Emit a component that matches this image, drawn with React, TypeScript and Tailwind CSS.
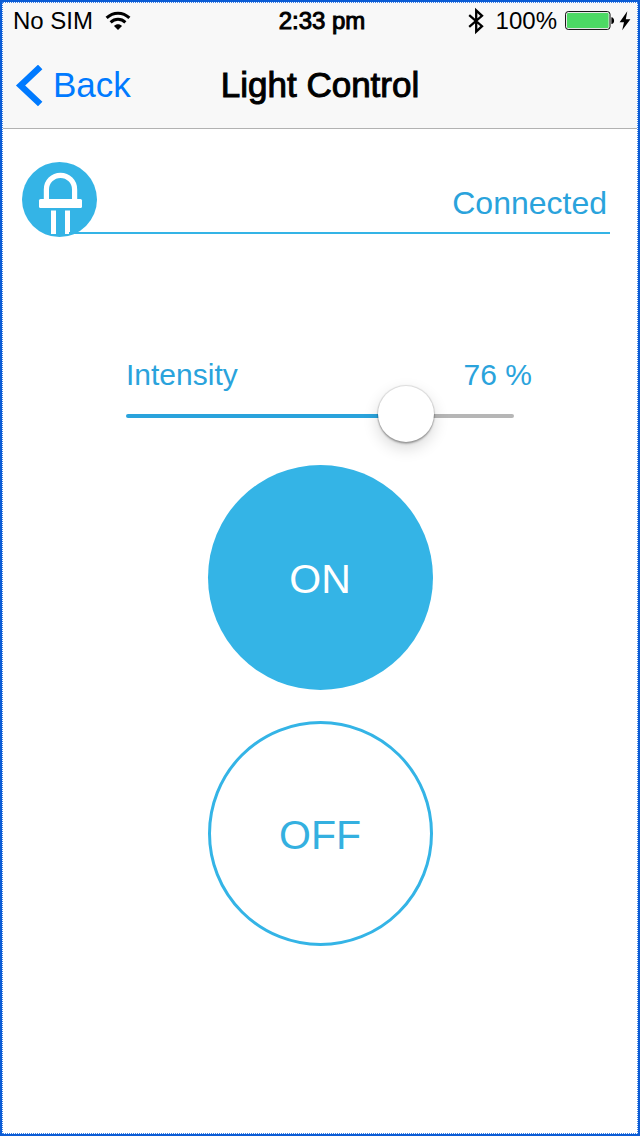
import { useState } from "react";

function WifiIcon() {
  return (
    <svg viewBox="0 0 26 20" className="h-5 w-[26px]" aria-hidden="true">
      <g fill="none" stroke="#000" strokeWidth="3">
        <path d="M1.6 6.9C8.2 .6 17.8 .6 24.4 6.9" />
        <path d="M5.6 11.3C9.9 7.3 16.1 7.3 20.4 11.3" />
      </g>
      <path d="M9 14.9C11.2 12.6 14.8 12.6 17 14.9L13 19Z" />
    </svg>
  );
}

function BluetoothIcon() {
  return (
    <svg viewBox="0 0 16 28" className="h-7 w-4" aria-hidden="true">
      <path
        d="M1.2 8.2 14 19.2 8.2 24.6V3.4L14 8.8 1.2 19.8"
        fill="none"
        stroke="#000"
        strokeWidth="2.3"
      />
    </svg>
  );
}

function BatteryIcon() {
  return (
    <svg viewBox="0 0 50 20" className="h-5 w-[50px]" aria-hidden="true">
      <rect x=".6" y=".6" width="44.4" height="17.8" rx="2.6" fill="#fff" stroke="#000" strokeWidth="1" />
      <rect x="2" y="2" width="41.6" height="15" rx="1" fill="#4cd964" />
      <path d="M46.4 6.2c3.6.3 3.6 6.6 0 6.9z" />
    </svg>
  );
}

function BoltIcon() {
  return (
    <svg viewBox="0 0 12 20" className="h-5 w-3" aria-hidden="true">
      <path d="M8.3.2.6 11.2H5L3.2 19.2 11.4 8.2H6.8Z" />
    </svg>
  );
}

function LedIcon() {
  return (
    <svg viewBox="0 0 75 75" className="h-[75px] w-[75px] shrink-0" aria-hidden="true">
      <circle cx="37.5" cy="37.5" r="37.5" fill="#34b4e6" />
      <path d="M24.4 39V27.6a14.1 14.1 0 0 1 28.2 0V39" fill="none" stroke="#fff" strokeWidth="5.2" transform="translate(0 -.2)" />
      <rect x="17" y="37" width="43" height="9" rx="1.5" fill="#fff" />
      <path d="M29 48.5h5V72h-5zM43 48.5h5V72h-5z" fill="#fff" />
    </svg>
  );
}

export default function App() {
  const [intensity, setIntensity] = useState(76);
  const [on, setOn] = useState(true);

  return (
    <div className="flex min-h-screen flex-col border-2 border-[#0b5cd5] bg-white font-['Liberation_Sans',Arial,sans-serif] text-black">
      <div className="flex flex-1 flex-col border border-dotted border-[#3f83e6]">
        <header className="border-b border-[#b2b2b2] bg-[#f8f8f8]">
          <div className="grid h-9 grid-cols-[1fr_auto_1fr] items-center pr-1.5 pl-2.5 text-2xl">
            <div className="flex items-center gap-3">
              <span>No SIM</span>
              <WifiIcon />
            </div>
            <time className="[-webkit-text-stroke:1px_black]">2:33 pm</time>
            <div className="flex items-center justify-end gap-1">
              <BluetoothIcon />
              <span className="ml-2">100%</span>
              <span className="ml-1"><BatteryIcon /></span>
              <BoltIcon />
            </div>
          </div>
          <div className="grid h-[89px] grid-cols-[1fr_auto_1fr] items-center px-3 pt-1 text-[35px]">
            <a href="#back" className="flex items-center gap-2.5 text-[#007aff]">
              <svg viewBox="0 0 28 42" className="h-[42px] w-7" aria-hidden="true">
                <path d="M25.2 2 5.6 20.5 25.2 39" fill="none" stroke="#007aff" strokeWidth="6.4" />
              </svg>
              <span>Back</span>
            </a>
            <h1 className="[-webkit-text-stroke:1px_black]">Light Control</h1>
          </div>
        </header>

        <main className="flex-1 pt-[33px]">
          <section className="ml-[19px] mr-[27px] flex items-start">
            <LedIcon />
            <p className="z-10 -ml-7 flex-1 border-b-2 border-[#34b4e6] pt-5 pr-[3px] pb-2 text-right text-[32px] leading-[42px] text-[#2aa3dc]">
              Connected
            </p>
          </section>

          <section className="mx-auto mt-[120px] max-w-[388px]">
            <div className="-mr-[18px] flex justify-between text-3xl text-[#2aa3dc]">
              <label htmlFor="intensity">Intensity</label>
              <output htmlFor="intensity">{intensity} %</output>
            </div>
            <input
              id="intensity"
              type="range"
              min="0"
              max="100"
              value={intensity}
              onChange={(e) => setIntensity(Number(e.target.value))}
              style={{
                backgroundImage: `linear-gradient(to right, #2aa3dc ${intensity}%, #b6b6b6 ${intensity}%)`,
              }}
              className="mt-[21px] block h-1 w-full appearance-none rounded-full [&::-webkit-slider-thumb]:-mt-1 [&::-webkit-slider-thumb]:size-14 [&::-webkit-slider-thumb]:appearance-none [&::-webkit-slider-thumb]:rounded-full [&::-webkit-slider-thumb]:bg-white [&::-webkit-slider-thumb]:shadow-[0_0_1px_1px_rgba(0,0,0,0.12),0_2px_2px_rgba(0,0,0,0.25),0_6px_16px_rgba(0,0,0,0.16)]"
            />
          </section>

          <section className="mt-[47px] flex flex-col items-center gap-[31px] text-[41px]">
            <button
              type="button"
              aria-pressed={on}
              onClick={() => setOn(true)}
              className="size-[225px] rounded-full bg-[#34b4e6] pt-1 text-white"
            >
              ON
            </button>
            <button
              type="button"
              aria-pressed={!on}
              onClick={() => setOn(false)}
              className="size-[225px] rounded-full border-3 border-[#34b4e6] bg-white pt-1 text-[#34b0e0]"
            >
              OFF
            </button>
          </section>
        </main>
      </div>
    </div>
  );
}
